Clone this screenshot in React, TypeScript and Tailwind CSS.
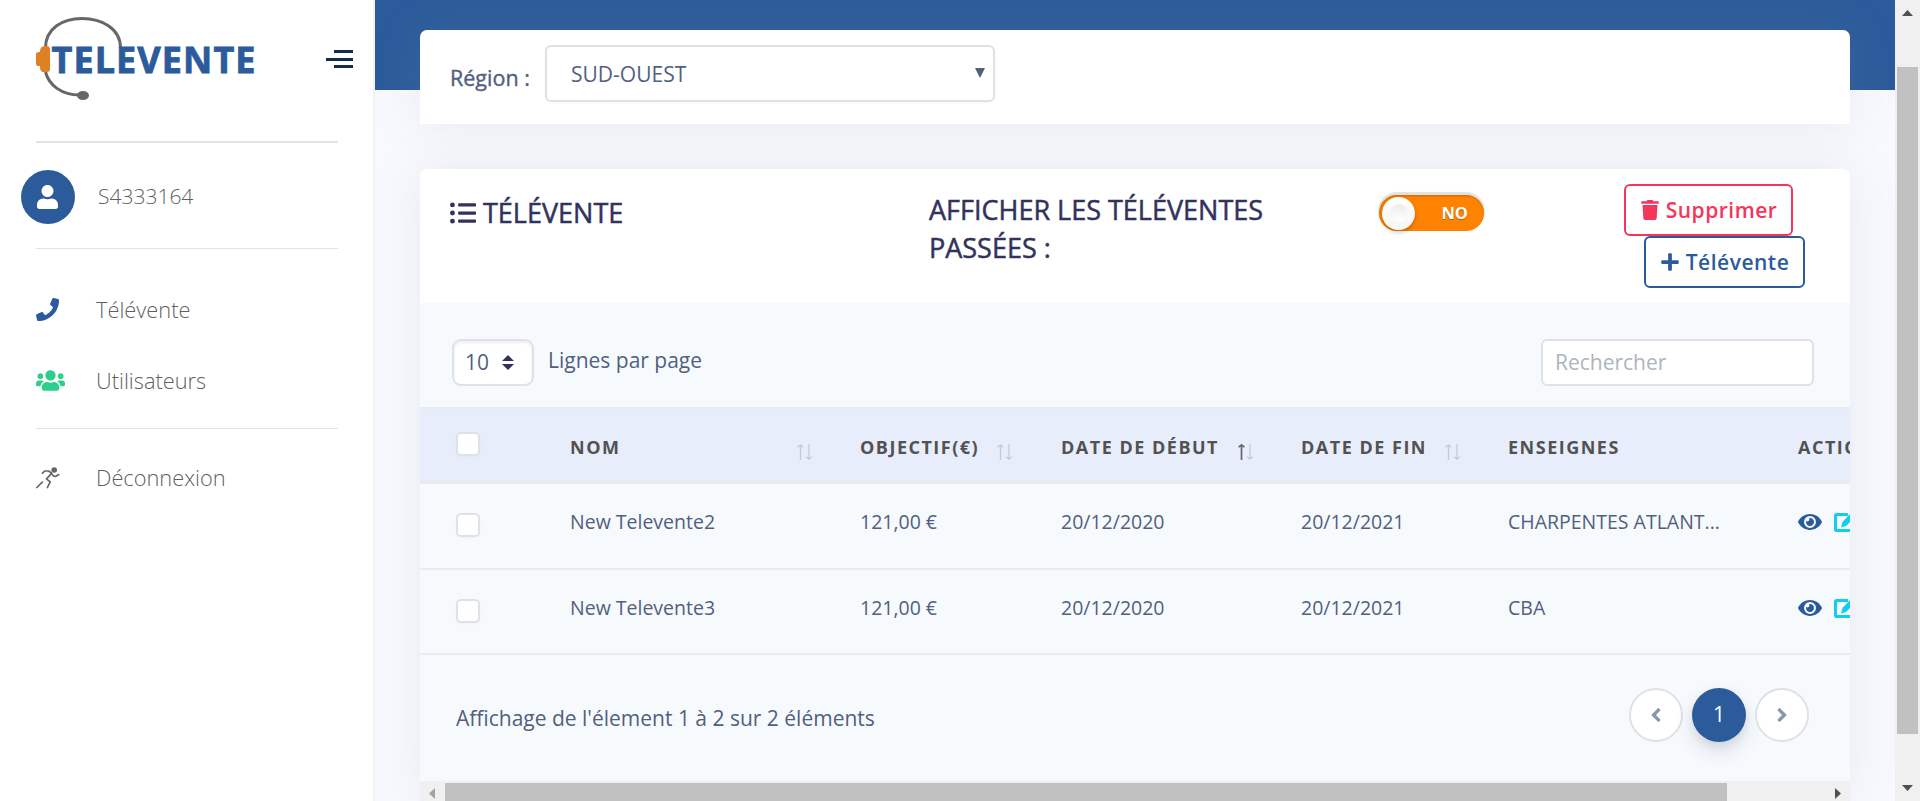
import React from "react";
import { FaPhone, FaUsers, FaUser, FaListUl, FaTrash, FaPlus, FaEye, FaAngleLeft, FaAngleRight } from "react-icons/fa";

const COLS = "grid w-[1580px] grid-cols-[150px_290px_201px_240px_207px_290px_202px] pl-0";

function Logo() {
  return (
    <svg width="222" height="90" viewBox="0 0 222 90" className="block">
      <g fill="none" stroke="#666768" strokeWidth="3">
        <path d="M9.500 34C9.500 14 27 4.500 46 4.500S84.500 14 84.500 34" />
        <path d="M9.500 58C13 71 25 81 44 81" />
      </g>
      <ellipse cx="47" cy="81.500" rx="6" ry="4.500" fill="#666768" />
      <path d="M3 38h1c0-4 2-6 5-6h2c2 0 3 1.500 3 3v20c0 2-1 3-3 3H8c-3 0-4-2-4-6H2c-1 0-2-1-2-2V40c0-1 1-2 3-2z" fill="#dd8122" />
      <text x="15.500" y="58.500" textLength="204" lengthAdjust="spacing" fontFamily="Open Sans" fontWeight="700" fontSize="36" fill="#2b5b9b" stroke="#2b5b9b" strokeWidth=".8">TELEVENTE</text>
    </svg>
  );
}

function Runner() {
  return (
    <svg width="24" height="22" viewBox="0 0 24 22" fill="none" stroke="#666" strokeWidth="1.700" strokeLinejoin="round" strokeLinecap="round">
      <circle cx="18.200" cy="3" r="2.800" fill="#666" stroke="none" />
      <path d="M6.500 6.200 8.700 4h3.800l3.300 2.200-5.300 5.600 3.700 3-2.800 5.700M15.500 7l2.300 2.200 1.700.3 3.200-1.900M.8 20.500l5.500-5.300" />
    </svg>
  );
}

function NavItem({ icon, label }: { icon: React.ReactNode; label: string }) {
  return (
    <div className="flex h-[71px] items-center pl-9">
      <span className="flex w-[60px] shrink-0 items-center">{icon}</span>
      <span className="text-[21.800px] font-light leading-[30px] text-[#5f5f5f]">{label}</span>
    </div>
  );
}

function Sidebar() {
  return (
    <aside className="flex h-[801px] w-[375px] shrink-0 flex-col border-r-2 border-[#f1f2f7] bg-white">
      <div className="flex h-[141px] items-start justify-between pl-9 pr-5 pt-[14px]">
        <Logo />
        <div className="mt-9 flex flex-col items-end gap-[4.500px]">
          <i className="block h-[3px] w-[19px] bg-[#172b4d]" />
          <i className="block h-[3px] w-[27px] bg-[#172b4d]" />
          <i className="block h-[3px] w-[19px] bg-[#172b4d]" />
        </div>
      </div>
      <div className="ml-9 h-[1.500px] w-[302px] bg-[#e3e3e4]" />
      <div className="flex h-[105.500px] items-center pl-[21px] pt-[3px]">
        <span className="flex size-[54px] items-center justify-center rounded-full bg-[#2b5b9b]">
          <FaUser className="-ml-px h-[24px] w-[21px] text-white" />
        </span>
        <span className="ml-[23px] text-[21px] font-light text-[#5f5f5f]">S4333164</span>
      </div>
      <div className="ml-9 h-px w-[302px] bg-[#e3e3e4]" />
      <div className="pt-[25px]">
        <NavItem icon={<FaPhone size={23} color="#2b5b9b" className="-mt-px" />} label="Télévente" />
        <NavItem icon={<FaUsers size={29} color="#2dce89" />} label="Utilisateurs" />
      </div>
      <div className="ml-9 mt-3 h-px w-[302px] bg-[#e3e3e4]" />
      <div className="pt-[13px]">
        <NavItem icon={<Runner />} label="Déconnexion" />
      </div>
    </aside>
  );
}

function SortArrows({ asc = false }: { asc?: boolean }) {
  return (
    <svg width="16" height="16" viewBox="0 0 16 16" fill="none" className="mt-[9px]">
      <g stroke={asc ? "#66676b" : "#c5cad6"} strokeWidth={asc ? 1.7 : 1.3}>
        <path d="M3.500 16V1M.6 3.200 3.500.9l2.900 2.300" />
      </g>
      <path d="M12 0v15M9.100 12.800 12 15.100l2.900-2.300" stroke="#c5cad6" strokeWidth="1.300" />
    </svg>
  );
}

function Check() {
  return <span className="block size-6 rounded-[5px] border-2 border-[#dee2e6] bg-white shadow-[0_1px_3px_rgba(0,0,0,0.03)]" />;
}

function Head({ label, gap, asc, sortable = true }: { label: string; gap?: string; asc?: boolean; sortable?: boolean }) {
  return (
    <div className="flex items-center pt-[6px]">
      <span className="whitespace-nowrap text-[18px] font-bold leading-[27px] tracking-[1.500px] text-[#525252]">{label}</span>
      {sortable && (
        <span className={"ml-auto " + (gap ?? "")}>
          <SortArrows asc={asc} />
        </span>
      )}
    </div>
  );
}

function Row({ name, brand, h }: { name: string; brand: string; h: string }) {
  return (
    <div className={COLS + " " + h + " border-b-2 border-[#e9ecef] pt-[23px] text-[19.500px] leading-[30px] text-[#525f7f]"}>
      <div className="pl-9 pt-[6px]"><Check /></div>
      <div>{name}</div>
      <div>121,00 €</div>
      <div>20/12/2020</div>
      <div>20/12/2021</div>
      <div>{brand}</div>
      <div className="flex items-start gap-[12px] pt-[3px]">
        <FaEye size={24} color="#2b5b9b" />
        <svg width="22" height="20" viewBox="0 0 22 20" className="mt-[3px]">
          <path d="M14 1.500H2.500a1 1 0 0 0-1 1v14a1 1 0 0 0 1 1h14a1 1 0 0 0 1-1V10" fill="none" stroke="#11cdef" strokeWidth="3" />
          <path d="M17 0l4 4-9 9-5 1.500L8.500 9z" fill="#11cdef" />
        </svg>
      </div>
    </div>
  );
}

export default function App() {
  return (
    <div className="flex h-[801px] w-[1920px] overflow-hidden bg-[#f8f9fe] font-['Open_Sans',sans-serif]">
      <Sidebar />
      <main className="h-[801px] w-[1520px] shrink-0 overflow-hidden bg-[linear-gradient(#2b5b9b_90px,#f8f9fe_90px)] px-[45px] pt-[30px]">
        <section className="flex h-[94px] items-start rounded-t-[7px] bg-white pl-[30px] pt-[15px] shadow-[0_0_48px_rgba(136,152,170,0.15)]">
          <label className="mt-[17px] w-[95px] whitespace-nowrap text-[21.500px] leading-[31px] text-[#525f7f] [-webkit-text-stroke:0.4px_#525f7f]">Région :</label>
          <div className="flex h-[57px] w-[450px] items-center justify-between rounded-[6px] border-2 border-[#dee2e6] bg-white pl-[24px] pr-[8px] pt-0.5 text-[21px] text-[#525f7f] shadow-[0_1px_3px_rgba(0,0,0,0.03)]">
            <span>SUD-OUEST</span>
            <svg width="10" height="10" viewBox="0 0 10 10" className="mb-[3px]"><path d="M0 0h10L5 10z" fill="#525f7f" /></svg>
          </div>
        </section>

        <section className="mt-[45px] h-[632px] overflow-hidden rounded-t-[7px] bg-[#f6fafd] shadow-[0_0_48px_rgba(136,152,170,0.15)]">
          <header className="flex h-[134px] items-start bg-white text-[27px] leading-[38.250px] text-[#32325d]">
            <h2 className="flex w-[509px] items-center gap-[7px] pl-[30px] pt-[25px] [-webkit-text-stroke:0.5px_#32325d]">
              <FaListUl size={26} />
              <span>TÉLÉVENTE</span>
            </h2>
            <h2 className="w-[450px] pr-20 pt-[22px] [-webkit-text-stroke:0.5px_#32325d]">AFFICHER LES TÉLÉVENTES PASSÉES :</h2>
            <div className="mt-[26px] flex h-9 w-[105px] items-center justify-between rounded-full bg-[#ff8300] pl-[3px] pr-[16px] shadow-[0_-2px_1px_1px_#e2e2e2,inset_0_1px_2px_rgba(0,0,0,0.2)]">
              <span className="flex size-[33px] items-center justify-center rounded-full bg-linear-to-b from-white to-[#f6f6f6] shadow-[0_2px_4px_rgba(0,0,0,0.25)]">
                <i className="block size-[18px] rounded-full bg-linear-to-b from-[#ececec] to-white" />
              </span>
              <span className="text-[16.500px] font-bold leading-none text-white [text-shadow:0_1px_1px_rgba(0,0,0,0.3)]">NO</span>
            </div>
            <div className="ml-auto flex w-[181px] flex-col items-end pr-0 pt-[15px] text-[21px] font-semibold leading-[31px] tracking-[0.500px]">
              <button className="mr-[12px] flex h-[52px] w-[169px] items-center justify-center gap-[6px] rounded-[6px] border-2 border-[#f5365c] text-[#f5365c]">
                <FaTrash size={20} />
                Supprimer
              </button>
              <button className="flex h-[52px] w-[161px] items-center justify-center gap-[6px] rounded-[6px] border-2 border-[#2b5b9b] text-[#2b5b9b]">
                <FaPlus size={20} />
                Télévente
              </button>
            </div>
            <div className="w-[45px]" />
          </header>

          <div className="flex h-[104px] items-start pl-8 pr-9 pt-9 text-[21px] text-[#525f7f]">
            <div className="flex h-[47px] w-[82px] items-center justify-between rounded-[9px] border-2 border-[#dee2e6] bg-white pl-[11px] pr-[18px] shadow-[inset_0_2px_3px_rgba(0,0,0,0.07)]">
              <span>10</span>
              <svg width="12" height="15" viewBox="0 0 12 15"><path d="M6 0l6 6H0zM6 15l6-6H0z" fill="#32325d" /></svg>
            </div>
            <span className="ml-[14px] mt-[6px] leading-[31px]">Lignes par page</span>
            <div className="ml-auto flex h-[47px] w-[273px] items-center rounded-[6px] border-2 border-[#dee2e6] bg-white pl-[12px] text-[#adb5bd]">Rechercher</div>
          </div>

          <div className={COLS + " h-[77px] border-b-4 border-t-2 border-[#e9ecef] bg-[#e7edfb]"}>
            <div className="pl-9 pt-[23px]"><Check /></div>
            <Head label="NOM" gap="mr-[47px]" />
            <Head label="OBJECTIF(€)" gap="mr-[48px]" />
            <Head label="DATE DE DÉBUT" gap="mr-[47px]" asc />
            <Head label="DATE DE FIN" gap="mr-[47px]" />
            <Head label="ENSEIGNES" sortable={false} />
            <Head label="ACTIONS" sortable={false} />
          </div>
          <Row name="New Televente2" brand="CHARPENTES ATLANT..." h="h-[86px]" />
          <Row name="New Televente3" brand="CBA" h="h-[85px]" />

          <div className="flex h-[126px] items-start pl-9 pr-[41px] pt-[33px] text-[21px] text-[#525f7f]">
            <span className="mt-[15px] leading-[31px]">Affichage de l'élement 1 à 2 sur 2 éléments</span>
            <div className="ml-auto flex gap-[9px]">
              <span className="flex size-[54px] items-center justify-center rounded-full border-2 border-[#dee2e6] bg-white text-[#8898aa]"><FaAngleLeft size={22} /></span>
              <span className="flex size-[54px] items-center justify-center rounded-full bg-[#2b5b9b] text-white shadow-[0_10px_20px_rgba(50,50,93,0.12),0_4px_9px_rgba(0,0,0,0.08)]">1</span>
              <span className="flex size-[54px] items-center justify-center rounded-full border-2 border-[#dee2e6] bg-white text-[#8898aa]"><FaAngleRight size={22} /></span>
            </div>
          </div>

          <div className="flex h-5 bg-[#f0f0f0]">
            <svg width="25" height="20" viewBox="0 0 25 20"><path d="M9 12.500L15 7v11z" fill="#a3a3a3" /></svg>
            <div className="mt-[2px] h-[18px] w-[1282px] bg-[#c1c1c1]" />
            <svg width="25" height="20" viewBox="0 0 25 20" className="ml-auto"><path d="M16 12.500L10 7v11z" fill="#505050" /></svg>
          </div>
        </section>
      </main>

      <div className="flex h-[801px] w-[25px] shrink-0 flex-col items-center bg-[#f0f0f0]">
        <svg width="25" height="67" viewBox="0 0 25 67" className="shrink-0"><path d="M12.500 10l5.500 6H7z" fill="#505050" /></svg>
        <div className="h-[667px] w-[21px] shrink-0 bg-[#c1c1c1]" />
        <svg width="25" height="67" viewBox="0 0 25 67" className="shrink-0"><path d="M12.500 57l5.500-6H7z" fill="#505050" /></svg>
      </div>
    </div>
  );
}
